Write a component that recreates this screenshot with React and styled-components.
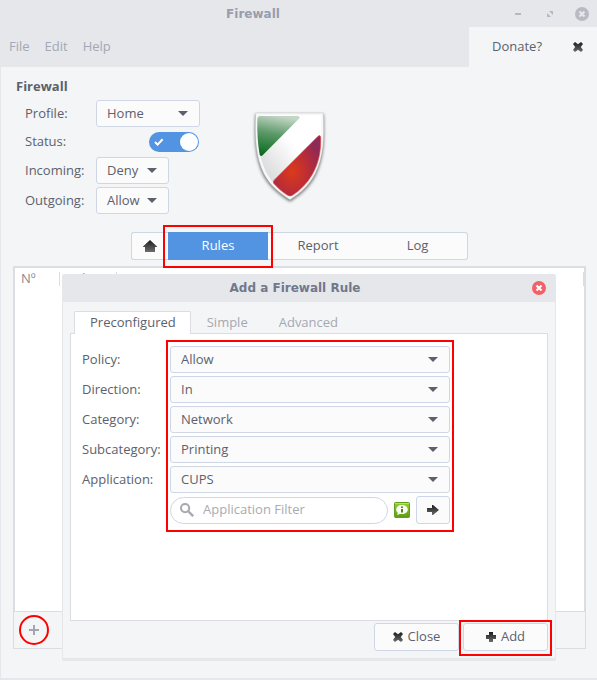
import React, { useState } from "react";
import styled, { createGlobalStyle, css } from "styled-components";

const c = {
  chrome: "#e6e7eb",
  base: "#f4f5f7",
  control: "#fbfbfc",
  line: "#cfd6e6",
  frame: "#dbdde3",
  text: "#5c616c",
  faded: "#a2a7b5",
  blue: "#5294e2",
  mark: "#ff0000",
};

const GlobalStyle = createGlobalStyle`
  *, *::before, *::after { box-sizing: border-box; }
  body { margin: 0; background: ${c.chrome}; }
  body, button, input, select {
    font-family: "Open Sans", "Noto Sans", sans-serif;
    font-size: 13px;
    line-height: 20px;
    color: ${c.text};
  }
  button { padding: 0; border: 0; background: none; cursor: pointer; }
  svg { display: block; flex: none; }
`;

/* ---------- icons ---------- */

const DarkGradient = ({ id }) => (
  <defs>
    <linearGradient id={id} x1="0" y1="0" x2="0" y2="1">
      <stop offset="0" stopColor="#1c1c1c" />
      <stop offset="1" stopColor="#6c6c6c" />
    </linearGradient>
  </defs>
);

const CrossIcon = ({ id }) => (
  <svg width="10" height="10" viewBox="0 0 10 10" aria-hidden="true">
    <DarkGradient id={id} />
    <path
      fill={`url(#${id})`}
      d="M2 0L5 2.200 8 0 10 2 7.800 5 10 8 8 10 5 7.800 2 10 0 8 2.200 5 0 2z"
    />
  </svg>
);

const PlusIcon = () => (
  <svg width="10" height="10" viewBox="0 0 10 10" aria-hidden="true">
    <DarkGradient id="plus" />
    <path fill="url(#plus)" d="M3 0h4v3h3v4H7v3H3V7H0V3h3z" />
  </svg>
);

const HomeIcon = () => (
  <svg width="14" height="12" viewBox="0 0 14 12" aria-hidden="true">
    <DarkGradient id="home" />
    <path fill="url(#home)" d="M7 0l7 6.500V7h-2v5H2V7H0v-.5z" />
  </svg>
);

const ArrowIcon = () => (
  <svg width="12" height="10" viewBox="0 0 12 10" aria-hidden="true">
    <DarkGradient id="arrow" />
    <path fill="url(#arrow)" d="M0 3h5V0h1l6 5-6 5H5V7H0z" />
  </svg>
);

const CaretIcon = () => (
  <svg width="10" height="5" viewBox="0 0 10 5" aria-hidden="true">
    <path fill={c.text} d="M0 0h10L5 5z" />
  </svg>
);

const SearchIcon = () => (
  <svg width="14" height="14" viewBox="0 0 14 14" aria-hidden="true">
    <circle cx="5.100" cy="5.100" r="4.100" fill="none" stroke="#a7a9ae" strokeWidth="2" />
    <path d="M8 8l5.200 5.200" stroke="#a7a9ae" strokeWidth="2.400" />
  </svg>
);

const InfoIcon = () => (
  <svg width="16" height="16" viewBox="0 0 16 16" aria-hidden="true">
    <defs>
      <linearGradient id="info" x1="0" y1="0" x2="0" y2="1">
        <stop offset="0" stopColor="#96d232" />
        <stop offset="1" stopColor="#5c9c12" />
      </linearGradient>
    </defs>
    <rect x=".5" y=".5" width="15" height="15" rx="1" fill="url(#info)" stroke="#5f9f1c" />
    <path d="M1 1.500h14" stroke="#b4e45c" />
    <path
      fill="#fafcf4"
      d="M8 3c3.300 0 5.800 2 5.800 4.500S11.300 12 8 12c-.8 0-1.500-.1-2.100-.3L3.200 13.300l.6-2.500C2.800 10 2.200 8.800 2.200 7.500 2.200 5 4.700 3 8 3z"
    />
    <path fill="#4d8a14" d="M7 4.500h2V6H7zM7 7h2v3.500H7z" />
  </svg>
);

const AddIcon = () => (
  <svg width="10" height="10" viewBox="0 0 10 10" aria-hidden="true">
    <path d="M5 0v10M0 5h10" stroke="#a3a6b0" strokeWidth="2" />
  </svg>
);

const RoundClose = ({ fill, cross }) => (
  <svg width="14" height="14" viewBox="0 0 14 14" aria-hidden="true">
    <circle cx="7" cy="7" r="7" fill={fill} />
    <path d="M4.500 4.500l5 5m0-5l-5 5" stroke={cross} strokeWidth="2.200" />
  </svg>
);

const MinimizeIcon = () => (
  <svg width="6" height="2" viewBox="0 0 6 2" aria-hidden="true">
    <path fill="#b4b8c0" d="M0 0h6v2H0z" />
  </svg>
);

const MaximizeIcon = () => (
  <svg width="6" height="6" viewBox="0 0 6 6" aria-hidden="true">
    <path fill="#b4b8c0" d="M2 0h4v4zM0 2l4 4H0z" />
  </svg>
);

const TickIcon = () => (
  <svg width="10" height="8" viewBox="0 0 10 8" aria-hidden="true">
    <path d="M1 4l2.600 2.600L8.600 1.200" fill="none" stroke="#fff" strokeWidth="2" />
  </svg>
);

const ShieldLogo = () => (
  <svg width="76" height="95" viewBox="66 45 228 285" role="img" aria-label="Firewall shield">
    <defs>
      <linearGradient id="body" x1="0" y1="1" x2="1" y2="0">
        <stop offset="0" stopColor="#c9c9c9" />
        <stop offset=".6" stopColor="#ffffff" />
      </linearGradient>
      <linearGradient id="green" x1=".5" y1="0" x2=".3" y2="1">
        <stop offset="0" stopColor="#c3d6c6" />
        <stop offset=".45" stopColor="#5c9a69" />
        <stop offset="1" stopColor="#0a6a1e" />
      </linearGradient>
      <radialGradient id="red" cx=".4" cy=".6" r=".65">
        <stop offset="0" stopColor="#dc3a1a" />
        <stop offset=".55" stopColor="#b92c38" />
        <stop offset="1" stopColor="#8d2a55" />
      </radialGradient>
      <filter id="shade" x="-10%" y="-10%" width="120%" height="120%">
        <feGaussianBlur stdDeviation="4" />
      </filter>
    </defs>
    <path
      filter="url(#shade)"
      fill="#555"
      opacity=".75"
      d="M76 58H281C284 132 283 187 258 240C240 276 212 300 180 320C148 300 118 276 100 242C75 192 72 132 76 58z"
    />
    <path
      fill="#f7f7f7"
      stroke="#b4b4b4"
      strokeWidth="1"
      d="M77 54H280C283 129 281 184 256 235C238 271 211 295 180 314C149 295 120 271 102 237C77 187 74 129 77 54z"
    />
    <path
      fill="url(#body)"
      d="M84 61H273C275 128 274 180 249 230C232 264 208 286 180 304C152 286 126 264 109 232C84 184 82 128 84 61z"
    />
    <path
      fill="url(#green)"
      d="M90 63H203Q213 65 206 72L98 181Q92 186 89 179C83 145 81 110 82 72Q83 63 90 63z"
    />
    <path
      fill="url(#red)"
      stroke="#e23b3b"
      strokeWidth="2"
      d="M264 124Q271 118 272 127C273 170 266 204 247 238C232 264 212 285 187 301Q180 305 172 300C155 290 144 279 131 265Q128 260 133 255z"
    />
  </svg>
);

/* ---------- window chrome ---------- */

const Window = styled.main`
  display: flex;
  flex-direction: column;
  min-height: 100vh;
  background: ${c.base};
  border-bottom: 2px solid ${c.chrome};
`;

const TitleBar = styled.header`
  display: grid;
  grid-template-columns: 1fr auto;
  align-items: center;
  height: ${(p) => p.$height}px;
  padding-right: ${(p) => p.$end}px;
  background: ${c.chrome};
`;

const Title = styled.h1`
  margin: 0;
  text-align: center;
  font: bold 12px/18px "DejaVu Sans", sans-serif;
  color: ${(p) => (p.$active ? "#70788d" : "#979dae")};
`;

const WindowButtons = styled.div`
  display: flex;
  gap: 8px;
`;

const WindowButton = styled.button`
  display: grid;
  place-items: center;
  width: 24px;
  height: 20px;
`;

const MenuRow = styled.div`
  display: flex;
  justify-content: space-between;
  height: 40px;
  background: ${c.chrome};
`;

const MenuBar = styled.nav`
  display: flex;
  gap: 15px;
  padding-left: 9px;
`;

const MenuItem = styled.button`
  padding-bottom: 2px;
  color: ${c.faded};
`;

const DonateTab = styled.div`
  display: flex;
  align-items: center;
  justify-content: space-between;
  width: 128px;
  padding: 0 14px 0 23px;
  background: ${c.base};
`;

const DonateButton = styled.button`
  padding-bottom: 2px;
`;

const Body = styled.div`
  flex: 1;
  display: flex;
  flex-direction: column;
  padding: 10px 11px 29px 12px;
  border-left: 1px solid ${c.chrome};
`;

/* ---------- controls ---------- */

const FieldLabel = styled.label`
  padding-bottom: 2px;
`;

const SelectBox = styled.span`
  position: relative;
  display: block;
  width: ${(p) => p.$width};
  svg {
    position: absolute;
    right: 12px;
    top: 11px;
    pointer-events: none;
  }
`;

const NativeSelect = styled.select`
  appearance: none;
  display: block;
  width: 100%;
  height: 27px;
  padding: 0 28px 2px 10px;
  border: 1px solid ${c.line};
  border-radius: 3px;
  background: ${c.control};
`;

function Select({ id, value, options, width = "100%" }) {
  return (
    <SelectBox $width={width}>
      <NativeSelect id={id} defaultValue={value}>
        {(options || [value]).map((o) => (
          <option key={o}>{o}</option>
        ))}
      </NativeSelect>
      <CaretIcon />
    </SelectBox>
  );
}

const Switch = styled.span`
  position: relative;
  display: block;
  justify-self: end;
  height: 20px;
  margin-right: 1px;
  svg {
    position: absolute;
    left: 5px;
    top: 6px;
    pointer-events: none;
  }
`;

const SwitchInput = styled.input`
  appearance: none;
  display: flex;
  justify-content: flex-end;
  width: 50px;
  height: 20px;
  margin: 0;
  padding: 1px;
  border-radius: 10px;
  background: ${c.blue};
  &::after {
    content: "";
    width: 18px;
    height: 18px;
    border-radius: 50%;
    background: #fff;
  }
  &:not(:checked) {
    justify-content: flex-start;
    background: ${c.faded};
  }
`;

const outline = css`
  content: "";
  position: absolute;
  border: 2px solid ${c.mark};
  pointer-events: none;
`;

const PushButton = styled.button`
  position: relative;
  display: flex;
  align-items: center;
  justify-content: center;
  gap: 5px;
  width: ${(p) => p.$width}px;
  height: 28px;
  border: 1px solid ${c.line};
  border-radius: 3px;
  background: ${c.control};
  ${(p) =>
    p.$marked &&
    css`
      &::after {
        ${outline}
        inset: -4px -5px -6px;
      }
    `}
`;

const ButtonText = styled.span`
  padding-bottom: 2px;
`;

/* ---------- profile section ---------- */

const Overview = styled.section`
  display: flex;
  align-items: flex-start;
  gap: 52px;
`;

const SectionTitle = styled.h2`
  margin: 0 0 3px 3px;
  padding-bottom: 2px;
  font-size: 13px;
  line-height: 18px;
`;

const SettingsGrid = styled.div`
  display: grid;
  grid-template-columns: 71px 104px;
  grid-template-rows: 27px 30px 27px 3px 27px;
  align-items: center;
  padding-left: 12px;
`;

const RowGap = styled.div`
  grid-column: 1 / -1;
`;

const LogoBox = styled.div`
  padding-top: 33px;
`;

const ViewTabs = styled.div`
  display: flex;
  align-self: center;
  margin: 18px 0 6px;
`;

const ViewTab = styled.button`
  position: relative;
  display: grid;
  place-items: center;
  width: ${(p) => p.$width || 100}px;
  height: 28px;
  padding-bottom: ${(p) => (p.$width ? 0 : 2)}px;
  border: solid ${(p) => (p.$selected ? c.blue : c.line)};
  border-width: 1px 0;
  background: ${(p) => (p.$selected ? c.blue : c.control)};
  color: ${(p) => (p.$selected ? "#fff" : c.text)};
  &:first-child { border-left-width: 1px; border-radius: 3px 0 0 3px; }
  &:last-child { border-right-width: 1px; border-radius: 0 3px 3px 0; }
  ${(p) =>
    p.$marked &&
    css`
      z-index: 1;
      &::after {
        ${outline}
        inset: -8px -5px -9px;
      }
    `}
`;

/* ---------- rules list ---------- */

const RulesPane = styled.section`
  position: relative;
  flex: 1;
  display: flex;
  flex-direction: column;
`;

const RulesList = styled.div`
  flex: 1;
  border: 2px solid ${c.frame};
  border-bottom-width: 1px;
  background: #fff;
`;

const RulesTable = styled.table`
  width: 100%;
  border-collapse: collapse;
  table-layout: fixed;
`;

const HeaderCell = styled.th`
  width: ${(p) => (p.$width ? `${p.$width}px` : "auto")};
  height: 20px;
  padding: 0 0 0 6px;
  text-align: left;
  font-weight: normal;
  color: #868a94;
  background: linear-gradient(${c.frame}, ${c.frame}) right 4px / 1px 14px no-repeat;
`;

const RulesToolbar = styled.div`
  display: flex;
  align-items: center;
  height: 37px;
  padding-left: 5px;
  border: 1px solid ${c.frame};
  border-top: 0;
`;

const AddRuleButton = styled.button`
  display: grid;
  place-items: center;
  width: 30px;
  height: 30px;
  border: 2px solid ${c.mark};
  border-radius: 50%;
`;

/* ---------- dialog ---------- */

const Dialog = styled.section`
  position: absolute;
  z-index: 2;
  top: 8px;
  left: 49px;
  right: 30px;
  border: 1px solid ${c.chrome};
  border-width: 0 1px 3px;
  border-radius: 3px 3px 2px 2px;
  background: ${c.base};
`;

const DialogBody = styled.div`
  padding: 9px 7px 7px;
`;

const NotebookTabs = styled.div`
  display: flex;
  padding-left: 4px;
`;

const NotebookTab = styled.button`
  height: 23px;
  margin-bottom: -1px;
  padding: 0 14px 2px 15px;
  border: 1px solid transparent;
  border-bottom: 0;
  border-radius: 2px 2px 0 0;
  color: #a5a9b2;
  z-index: 1;
  ${(p) =>
    p.$selected &&
    css`
      border-color: ${c.frame};
      background: #fff;
      color: ${c.text};
    `}
`;

const NotebookPage = styled.div`
  min-height: 288px;
  padding: 12px 11px;
  border: 1px solid ${c.frame};
  background: #fff;
`;

const RuleForm = styled.form`
  position: relative;
  display: grid;
  grid-template-columns: 88px 280px;
  row-gap: 3px;
  align-items: center;
`;

const FormMark = styled.span`
  position: absolute;
  inset: -6px auto -8px 84px;
  width: 288px;
  border: 2px solid ${c.mark};
  pointer-events: none;
`;

const FilterRow = styled.div`
  grid-column: 2;
  display: flex;
  align-items: center;
  gap: 6px;
`;

const FilterBox = styled.label`
  flex: 1;
  display: flex;
  align-items: center;
  gap: 9px;
  min-width: 0;
  height: 27px;
  padding: 0 9px;
  border: 1px solid ${c.line};
  border-radius: 14px;
  background: #fff;
`;

const FilterInput = styled.input`
  flex: 1;
  min-width: 0;
  padding: 0 0 2px;
  border: 0;
  outline: 0;
  background: transparent;
  &::placeholder { color: #a9abb0; opacity: 1; }
`;

const DialogActions = styled.div`
  display: flex;
  justify-content: flex-end;
  gap: 4px;
  padding-top: 2px;
`;

const ruleFields = [
  ["Policy", "Allow"],
  ["Direction", "In"],
  ["Category", "Network"],
  ["Subcategory", "Printing"],
  ["Application", "CUPS"],
];

function AddRuleDialog() {
  const [filter, setFilter] = useState("");
  return (
    <Dialog role="dialog" aria-labelledby="dialog-title">
      <TitleBar $height={28} $end={4}>
        <Title as="h2" id="dialog-title" $active>Add a Firewall Rule</Title>
        <WindowButton type="button" aria-label="Close dialog">
          <RoundClose fill="#f46067" cross="#fff" />
        </WindowButton>
      </TitleBar>
      <DialogBody>
        <NotebookTabs role="tablist">
          {["Preconfigured", "Simple", "Advanced"].map((name, i) => (
            <NotebookTab key={name} type="button" role="tab" aria-selected={i === 0} $selected={i === 0}>
              {name}
            </NotebookTab>
          ))}
        </NotebookTabs>
        <NotebookPage role="tabpanel">
          <RuleForm onSubmit={(e) => e.preventDefault()}>
            {ruleFields.map(([label, value]) => (
              <React.Fragment key={label}>
                <FieldLabel htmlFor={label}>{label}:</FieldLabel>
                <Select id={label} value={value} />
              </React.Fragment>
            ))}
            <FilterRow>
              <FilterBox>
                <SearchIcon />
                <FilterInput
                  aria-label="Application Filter"
                  placeholder="Application Filter"
                  value={filter}
                  onChange={(e) => setFilter(e.target.value)}
                />
              </FilterBox>
              <button type="button" aria-label="Information"><InfoIcon /></button>
              <PushButton type="button" aria-label="Copy values" $width={34}><ArrowIcon /></PushButton>
            </FilterRow>
            <FormMark />
          </RuleForm>
        </NotebookPage>
        <DialogActions>
          <PushButton type="button" $width={85}>
            <CrossIcon id="cross-close" />
            <ButtonText>Close</ButtonText>
          </PushButton>
          <PushButton type="button" $width={85} $marked>
            <PlusIcon />
            <ButtonText>Add</ButtonText>
          </PushButton>
        </DialogActions>
      </DialogBody>
    </Dialog>
  );
}

export default function App() {
  return (
    <>
      <GlobalStyle />
      <Window>
        <TitleBar $height={27} $end={3}>
          <Title>Firewall</Title>
          <WindowButtons>
            <WindowButton aria-label="Minimize"><MinimizeIcon /></WindowButton>
            <WindowButton aria-label="Maximize"><MaximizeIcon /></WindowButton>
            <WindowButton aria-label="Close window"><RoundClose fill="#b8bbc3" cross={c.chrome} /></WindowButton>
          </WindowButtons>
        </TitleBar>
        <MenuRow>
          <MenuBar aria-label="Main menu">
            <MenuItem>File</MenuItem>
            <MenuItem>Edit</MenuItem>
            <MenuItem>Help</MenuItem>
          </MenuBar>
          <DonateTab>
            <DonateButton>Donate?</DonateButton>
            <button aria-label="Dismiss"><CrossIcon id="cross-donate" /></button>
          </DonateTab>
        </MenuRow>
        <Body>
          <Overview>
            <div>
              <SectionTitle>Firewall</SectionTitle>
              <SettingsGrid>
                <FieldLabel htmlFor="profile">Profile:</FieldLabel>
                <Select id="profile" value="Home" options={["Home", "Office", "Public"]} />
                <FieldLabel htmlFor="status">Status:</FieldLabel>
                <Switch>
                  <SwitchInput id="status" type="checkbox" role="switch" defaultChecked />
                  <TickIcon />
                </Switch>
                <FieldLabel htmlFor="incoming">Incoming:</FieldLabel>
                <Select id="incoming" value="Deny" options={["Allow", "Deny", "Reject"]} width="73px" />
                <RowGap />
                <FieldLabel htmlFor="outgoing">Outgoing:</FieldLabel>
                <Select id="outgoing" value="Allow" options={["Allow", "Deny", "Reject"]} width="73px" />
              </SettingsGrid>
            </div>
            <LogoBox><ShieldLogo /></LogoBox>
          </Overview>
          <ViewTabs role="tablist">
            <ViewTab role="tab" aria-label="Home" $width={37}><HomeIcon /></ViewTab>
            <ViewTab role="tab" aria-selected="true" $selected $marked>Rules</ViewTab>
            <ViewTab role="tab">Report</ViewTab>
            <ViewTab role="tab">Log</ViewTab>
          </ViewTabs>
          <RulesPane>
            <RulesList>
              <RulesTable>
                <thead>
                  <tr>
                    <HeaderCell $width={45}>Nº</HeaderCell>
                    <HeaderCell $width={57}>Rule</HeaderCell>
                    <HeaderCell />
                  </tr>
                </thead>
              </RulesTable>
            </RulesList>
            <RulesToolbar>
              <AddRuleButton aria-label="Add rule"><AddIcon /></AddRuleButton>
            </RulesToolbar>
            <AddRuleDialog />
          </RulesPane>
        </Body>
      </Window>
    </>
  );
}
